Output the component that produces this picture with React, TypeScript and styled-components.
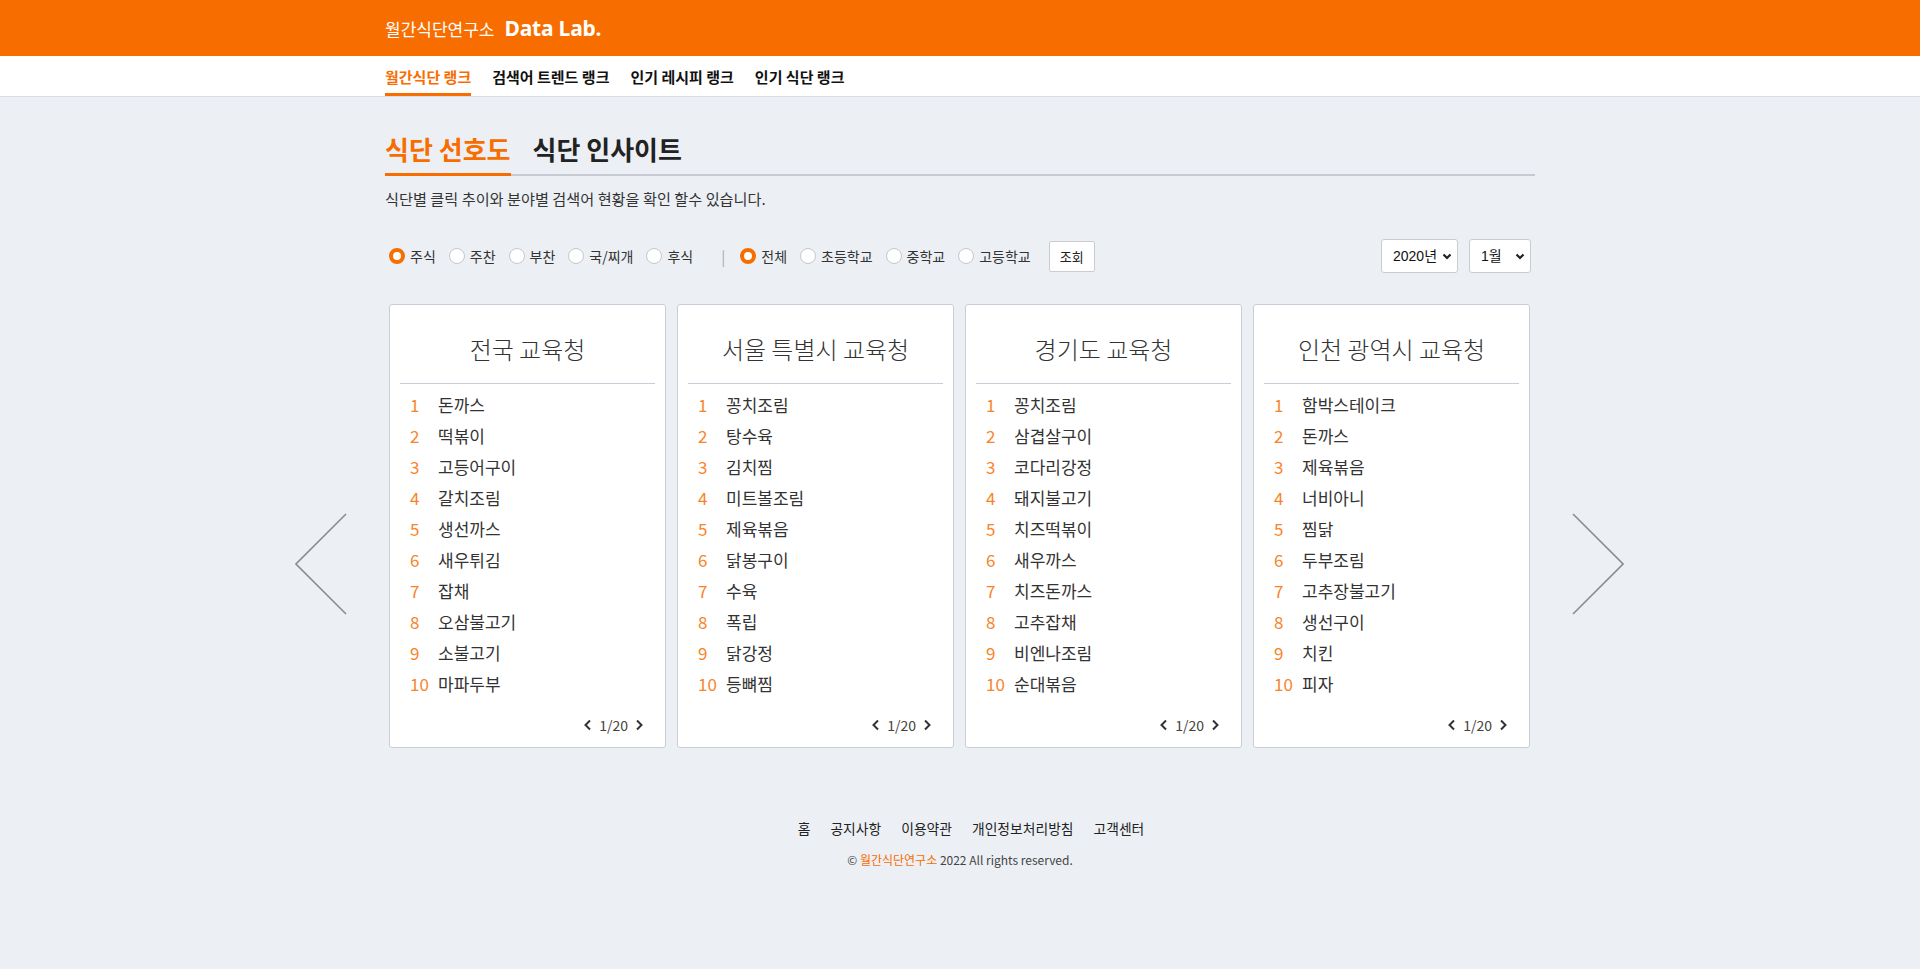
import React, { useState } from "react";
import styled, { createGlobalStyle } from "styled-components";

const ORANGE = "#f76d00";
const BORDER = "#c8ced8";

const GlobalStyle = createGlobalStyle`
  html, body { margin: 0; padding: 0; }
  body {
    background: #ecf0f5;
    font-family: "Noto Sans CJK KR", "Noto Sans", sans-serif;
    color: #333;
  }
  * { box-sizing: border-box; }
`;

const Header = styled.header`
  height: 56px;
  background: ${ORANGE};
`;

const Inner = styled.div`
  width: 1150px;
  margin: 0 auto;
`;

const HeaderInner = styled(Inner)`
  height: 100%;
  display: flex;
  align-items: center;
  color: #fff;
`;

const LogoKo = styled.span`
  font-size: 17px;
  font-weight: 400;
`;

const LogoEn = styled.span`
  margin-left: 10px;
  font-family: "Noto Sans", "Open Sans", sans-serif;
  font-size: 21px;
  font-weight: 700;
  letter-spacing: -0.2px;
`;

const Nav = styled.nav`
  background: #fff;
  border-bottom: 1px solid #d8dce3;
`;

const NavInner = styled(Inner)`
  display: flex;
  gap: 21px;
  height: 40px;
`;

const NavItem = styled.a<{ $active?: boolean }>`
  display: flex;
  align-items: center;
  font-size: 15px;
  font-weight: 700;
  color: ${(p) => (p.$active ? ORANGE : "#111")};
  text-decoration: none;
  border-bottom: 3px solid ${(p) => (p.$active ? ORANGE : "transparent")};
  padding-top: 3px;
  cursor: pointer;
`;

const Main = styled(Inner)`
  padding-top: 24px;
`;

const TabBar = styled.div`
  display: flex;
  gap: 22px;
  border-bottom: 2px solid #c5cad3;
`;

const Tab = styled.div<{ $active?: boolean }>`
  font-size: 26px;
  font-weight: 700;
  line-height: 34px;
  padding: 11px 0 7px;
  margin-bottom: -2px;
  color: ${(p) => (p.$active ? ORANGE : "#222")};
  border-bottom: 3px solid ${(p) => (p.$active ? ORANGE : "transparent")};
  cursor: pointer;
`;

const Desc = styled.p`
  margin: 12px 0 0;
  font-size: 15.2px;
  line-height: 20px;
  color: #333;
`;

const FilterRow = styled.div`
  margin-top: 31px;
  padding: 0 4px;
  display: flex;
  align-items: center;
  height: 34px;
`;

const RadioGroup = styled.div`
  display: flex;
  align-items: center;
  gap: 13px;
`;

const RadioLabel = styled.label`
  display: flex;
  align-items: center;
  gap: 5px;
  font-size: 14px;
  color: #333;
  cursor: pointer;
`;

const RadioDot = styled.span<{ $checked?: boolean }>`
  width: 16px;
  height: 16px;
  border-radius: 50%;
  background: #fff;
  border: ${(p) => (p.$checked ? `4.5px solid ${ORANGE}` : "1px solid #c3c8cf")};
  flex-shrink: 0;
`;

const Separator = styled.span`
  margin: 0 15px 0 28px;
  color: #aaa;
  font-size: 15px;
`;

const SearchButton = styled.button`
  margin-left: 18px;
  height: 31px;
  width: 46px;
  background: #fff;
  border: 1px solid #c9ccd1;
  border-radius: 2px;
  font-family: inherit;
  font-size: 13px;
  color: #222;
  cursor: pointer;
`;

const SelectGroup = styled.div`
  margin-left: auto;
  display: flex;
  gap: 11px;
`;

const SelectWrap = styled.div<{ $w: number }>`
  position: relative;
  width: ${(p) => p.$w}px;
  height: 34px;
`;

const Select = styled.select`
  appearance: none;
  width: 100%;
  height: 100%;
  border: 1px solid #c9ccd1;
  border-radius: 3px;
  background: #fff;
  padding: 0 0 0 11px;
  font-family: "Liberation Sans", "Noto Sans CJK KR", sans-serif;
  font-size: 14px;
  color: #111;
  outline: none;
`;

const SelectArrow = styled.svg`
  position: absolute;
  right: 6px;
  top: 14px;
  pointer-events: none;
`;

const CardsArea = styled.div`
  position: relative;
  margin-top: 31px;
  padding: 0 4px;
`;

const CardGrid = styled.div`
  display: grid;
  grid-template-columns: repeat(4, 277px);
  gap: 11px;
`;

const Card = styled.div`
  height: 444px;
  background: #fff;
  border: 1px solid ${BORDER};
  border-radius: 3px;
  display: flex;
  flex-direction: column;
`;

const CardTitle = styled.h3`
  margin: 0 10px;
  padding: 29px 0 19px;
  border-bottom: 1px solid ${BORDER};
  text-align: center;
  font-size: 24px;
  line-height: 30px;
  font-weight: 300;
  color: #333;
`;

const RankList = styled.ol`
  list-style: none;
  margin: 0;
  padding: 5px 0 0 20px;
`;

const RankItem = styled.li`
  display: flex;
  font-size: 17px;
  line-height: 31px;
  color: #333;
`;

const RankNum = styled.span`
  width: 28px;
  color: #f7852a;
`;

const Pager = styled.div`
  margin-top: auto;
  padding: 0 21px 12px 0;
  display: flex;
  justify-content: flex-end;
  align-items: center;
  gap: 7px;
  font-size: 14px;
  line-height: 20px;
  color: #444;
`;

const PagerBtn = styled.svg`
  cursor: pointer;
`;

const SlideArrow = styled.button<{ $side: "left" | "right" }>`
  position: absolute;
  top: 209px;
  ${(p) => (p.$side === "left" ? "left: -90px;" : "right: -89px;")}
  width: 52px;
  height: 102px;
  padding: 0;
  border: none;
  background: none;
  cursor: pointer;
`;

const Footer = styled.footer`
  padding: 70px 0 80px;
  text-align: center;
`;

const FooterLinks = styled.div`
  display: flex;
  justify-content: center;
  gap: 20px;
  padding-left: 22px;
  font-size: 13.8px;
  line-height: 20px;
  color: #222;
`;

const FooterLink = styled.a`
  color: inherit;
  text-decoration: none;
  cursor: pointer;
`;

const Copyright = styled.div`
  margin-top: 12px;
  font-size: 12px;
  line-height: 20px;
  color: #444;
`;

const Brand = styled.span`
  color: ${ORANGE};
`;

const mealTypes = ["주식", "주찬", "부찬", "국/찌개", "후식"];
const schoolTypes = ["전체", "초등학교", "중학교", "고등학교"];

const cards = [
  {
    title: "전국 교육청",
    items: ["돈까스", "떡볶이", "고등어구이", "갈치조림", "생선까스", "새우튀김", "잡채", "오삼불고기", "소불고기", "마파두부"],
  },
  {
    title: "서울 특별시 교육청",
    items: ["꽁치조림", "탕수육", "김치찜", "미트볼조림", "제육볶음", "닭봉구이", "수육", "폭립", "닭강정", "등뼈찜"],
  },
  {
    title: "경기도 교육청",
    items: ["꽁치조림", "삼겹살구이", "코다리강정", "돼지불고기", "치즈떡볶이", "새우까스", "치즈돈까스", "고추잡채", "비엔나조림", "순대볶음"],
  },
  {
    title: "인천 광역시 교육청",
    items: ["함박스테이크", "돈까스", "제육볶음", "너비아니", "찜닭", "두부조림", "고추장불고기", "생선구이", "치킨", "피자"],
  },
];

function Radio({ label, checked, onClick }: { label: string; checked: boolean; onClick: () => void }) {
  return (
    <RadioLabel onClick={onClick}>
      <RadioDot $checked={checked} />
      {label}
    </RadioLabel>
  );
}

const Chevron = ({ dir }: { dir: "l" | "r" }) => (
  <PagerBtn width="9" height="12" viewBox="0 0 9 12">
    <polyline
      points={dir === "l" ? "7,1.5 2.5,6 7,10.5" : "2,1.5 6.5,6 2,10.5"}
      fill="none"
      stroke="#333"
      strokeWidth="2"
    />
  </PagerBtn>
);

export default function App() {
  const [meal, setMeal] = useState(0);
  const [school, setSchool] = useState(0);
  return (
    <>
      <GlobalStyle />
      <Header>
        <HeaderInner>
          <LogoKo>월간식단연구소</LogoKo>
          <LogoEn>Data Lab.</LogoEn>
        </HeaderInner>
      </Header>
      <Nav>
        <NavInner>
          <NavItem $active>월간식단 랭크</NavItem>
          <NavItem>검색어 트렌드 랭크</NavItem>
          <NavItem>인기 레시피 랭크</NavItem>
          <NavItem>인기 식단 랭크</NavItem>
        </NavInner>
      </Nav>
      <Main>
        <TabBar>
          <Tab $active>식단 선호도</Tab>
          <Tab>식단 인사이트</Tab>
        </TabBar>
        <Desc>식단별 클릭 추이와 분야별 검색어 현황을 확인 할수 있습니다.</Desc>
        <FilterRow>
          <RadioGroup>
            {mealTypes.map((m, i) => (
              <Radio key={m} label={m} checked={meal === i} onClick={() => setMeal(i)} />
            ))}
          </RadioGroup>
          <Separator>|</Separator>
          <RadioGroup>
            {schoolTypes.map((s, i) => (
              <Radio key={s} label={s} checked={school === i} onClick={() => setSchool(i)} />
            ))}
          </RadioGroup>
          <SearchButton>조회</SearchButton>
          <SelectGroup>
            <SelectWrap $w={77}>
              <Select defaultValue="2020">
                <option value="2020">2020년</option>
                <option value="2021">2021년</option>
                <option value="2022">2022년</option>
              </Select>
              <SelectArrow width="10" height="7" viewBox="0 0 10 7">
                <polyline points="1.5,1.5 5,5 8.5,1.5" fill="none" stroke="#222" strokeWidth="2.2" />
              </SelectArrow>
            </SelectWrap>
            <SelectWrap $w={62}>
              <Select defaultValue="1">
                {Array.from({ length: 12 }, (_, i) => (
                  <option key={i} value={String(i + 1)}>
                    {i + 1}월
                  </option>
                ))}
              </Select>
              <SelectArrow width="10" height="7" viewBox="0 0 10 7">
                <polyline points="1.5,1.5 5,5 8.5,1.5" fill="none" stroke="#222" strokeWidth="2.2" />
              </SelectArrow>
            </SelectWrap>
          </SelectGroup>
        </FilterRow>
        <CardsArea>
          <SlideArrow $side="left" aria-label="이전">
            <svg width="52" height="102" viewBox="0 0 52 102">
              <polyline points="51,1 1,51 51,101" fill="none" stroke="#8c8c8c" strokeWidth="1.6" />
            </svg>
          </SlideArrow>
          <CardGrid>
            {cards.map((c) => (
              <Card key={c.title}>
                <CardTitle>{c.title}</CardTitle>
                <RankList>
                  {c.items.map((it, i) => (
                    <RankItem key={i}>
                      <RankNum>{i + 1}</RankNum>
                      {it}
                    </RankItem>
                  ))}
                </RankList>
                <Pager>
                  <Chevron dir="l" />
                  <span>1/20</span>
                  <Chevron dir="r" />
                </Pager>
              </Card>
            ))}
          </CardGrid>
          <SlideArrow $side="right" aria-label="다음">
            <svg width="52" height="102" viewBox="0 0 52 102">
              <polyline points="1,1 51,51 1,101" fill="none" stroke="#8c8c8c" strokeWidth="1.6" />
            </svg>
          </SlideArrow>
        </CardsArea>
      </Main>
      <Footer>
        <FooterLinks>
          <FooterLink>홈</FooterLink>
          <FooterLink>공지사항</FooterLink>
          <FooterLink>이용약관</FooterLink>
          <FooterLink>개인정보처리방침</FooterLink>
          <FooterLink>고객센터</FooterLink>
        </FooterLinks>
        <Copyright>
          © <Brand>월간식단연구소</Brand> 2022 All rights reserved.
        </Copyright>
      </Footer>
    </>
  );
}
